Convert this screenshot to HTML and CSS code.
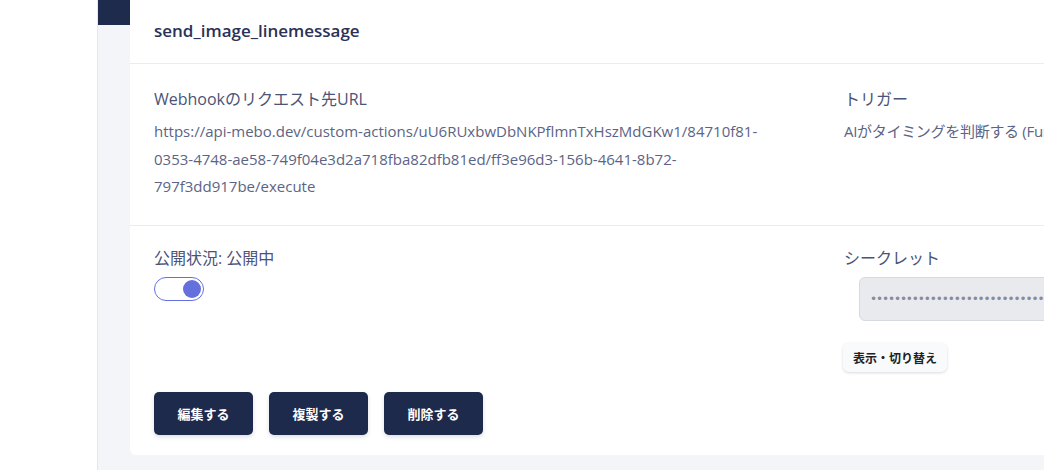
FILE: index.html
```html
<!DOCTYPE html>
<html lang="ja">
<head>
<meta charset="utf-8">
<link rel="stylesheet" href="styles.css">
</head>
<body>
<div class="layout">
  <aside class="sidebar"></aside>
  <main class="main">
    <div class="prev-block"></div>
    <section class="card">
      <header class="card-header">
        <h2 class="card-title">send_image_linemessage</h2>
      </header>
      <div class="card-row">
        <div class="field field-wide">
          <div class="label">Webhookのリクエスト先URL</div>
          <div class="value url">https://api-mebo.dev/custom-actions/uU6RUxbwDbNKPflmnTxHszMdGKw1/84710f81-<wbr>0353-4748-ae58-749f04e3d2a718fba82dfb81ed/ff3e96d3-156b-4641-8b72-<wbr>797f3dd917be/execute</div>
        </div>
        <div class="field">
          <div class="label">トリガー</div>
          <div class="value nowrap">AIがタイミングを判断する (Function Calling)</div>
        </div>
      </div>
      <div class="card-row card-row-last">
        <div class="field field-wide">
          <div class="label">公開状況: 公開中</div>
          <div class="toggle"><span class="knob"></span></div>
          <div class="actions">
            <button class="btn">編集する</button>
            <button class="btn">複製する</button>
            <button class="btn">削除する</button>
          </div>
        </div>
        <div class="field">
          <div class="label">シークレット</div>
          <div class="secret">••••••••••••••••••••••••••••••••••••••••••••••••</div>
          <button class="btn-light">表示・切り替え</button>
        </div>
      </div>
    </section>
  </main>
</div>
</body>
</html>
```

FILE: styles.css
```css
* { box-sizing: border-box; }
html, body { margin: 0; padding: 0; }
body {
  width: 1044px;
  height: 470px;
  overflow: hidden;
  font-family: "Open Sans", "Noto Sans CJK JP", sans-serif;
  background: #ffffff;
}
.layout {
  display: flex;
  height: 470px;
  overflow: hidden;
}
.sidebar {
  width: 98px;
  flex: none;
  background: #ffffff;
  border-right: 1px solid #e6e7ec;
}
.main {
  flex: none;
  width: 1200px;
  background: #f4f5f9;
  display: flex;
  align-items: flex-start;
}
.prev-block {
  width: 32px;
  height: 25px;
  flex: none;
  background: #1f2b4d;
}
.card {
  width: 1071px;
  flex: none;
  background: #ffffff;
  border-radius: 0 0 6px 6px;
  height: 455px;
}
.card-header {
  height: 64px;
  padding: 0 24px;
  display: flex;
  align-items: center;
  border-bottom: 1px solid #ececf0;
}
.card-title {
  margin: 0;
  font-size: 17px;
  font-weight: 600;
  color: #2b3058;
  padding-bottom: 3px;
}
.card-row {
  display: grid;
  grid-template-columns: 666px 1fr;
  column-gap: 24px;
  padding: 23px 24px 24px;
  border-bottom: 1px solid #ececf0;
}
.card-row-last { border-bottom: none; padding-top: 20px; }
.field { min-width: 0; }
.label {
  font-size: 16px;
  color: #4b5377;
  line-height: 24px;
  margin-bottom: 7px;
}
.value {
  font-size: 15px;
  color: #5c6485;
  line-height: 27.5px;
}
.url { max-width: 636px; }
.nowrap { white-space: nowrap; letter-spacing: -0.3px; }
.toggle {
  width: 50px;
  height: 24px;
  border: 1.5px solid #6570df;
  border-radius: 12px;
  background: #ffffff;
  display: flex;
  align-items: center;
  justify-content: flex-end;
  padding: 0 2px;
}
.knob {
  width: 18px;
  height: 18px;
  border-radius: 50%;
  background: #6470dc;
}
.actions {
  display: flex;
  gap: 16px;
  margin-top: 91px;
}
.btn {
  width: 99px;
  height: 43px;
  border: none;
  border-radius: 5px;
  background: #1e2a4b;
  color: #ffffff;
  font-family: "Open Sans", "Noto Sans CJK JP", sans-serif;
  font-size: 13px;
  font-weight: 700;
  box-shadow: 0 2px 4px rgba(30, 42, 75, 0.15);
}
.secret {
  margin-left: 15px;
  margin-top: 3px;
  height: 44px;
  background: #e9eaee;
  border: 1px solid #d6d9df;
  border-radius: 6px;
  padding: 0 10px;
  display: flex;
  align-items: center;
  font-family: "DejaVu Sans", sans-serif;
  font-size: 12px;
  color: #858c9e;
  letter-spacing: -1.1px;
  white-space: nowrap;
  overflow: hidden;
}
.btn-light {
  margin-top: 22px;
  margin-left: -1px;
  height: 29px;
  padding: 0 10px;
  border: none;
  border-radius: 6px;
  background: #f9fafb;
  box-shadow: 0 1px 3px rgba(0, 0, 0, 0.15);
  font-family: "Noto Sans CJK JP", sans-serif;
  font-size: 12px;
  font-weight: 700;
  color: #222;
}
```
